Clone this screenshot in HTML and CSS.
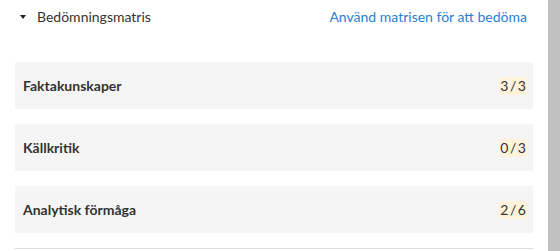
FILE: index.html
```html
<!DOCTYPE html>
<html lang="sv">
<head>
    <meta charset="UTF-8">
    <meta name="viewport" content="width=device-width, initial-scale=1.0">
    <title>Bedömningsmatris</title>
    <link rel="stylesheet" href="styles.css">
</head>
<body>
    <div class="window">
        <div class="panel">
            <div class="matrix-header">
                <div class="toggle">
                    <span class="caret"></span>
                    <span>Bedömningsmatris</span>
                </div>
                <a class="use-link" href="#">Använd matrisen för att bedöma</a>
            </div>

            <div class="criteria">
                <div class="criterion">
                    <span class="criterion-name">Faktakunskaper</span>
                    <span class="score">3 / 3</span>
                </div>
                <div class="criterion">
                    <span class="criterion-name">Källkritik</span>
                    <span class="score">0 / 3</span>
                </div>
                <div class="criterion">
                    <span class="criterion-name">Analytisk förmåga</span>
                    <span class="score">2 / 6</span>
                </div>
            </div>
        </div>
        <div class="scrollbar"></div>
    </div>
</body>
</html>
```

FILE: styles.css
```css
body {
    margin: 0;
    font-family: 'Lato', 'Open Sans', sans-serif;
    font-size: 14px;
    color: #333;
    background: #fff;
}

.window {
    display: flex;
    height: 251px;
    overflow: hidden;
}

.panel {
    flex: 1;
    padding: 0 15px;
}

.scrollbar {
    width: 12px;
    background: #c1c1c1;
}

.matrix-header {
    display: flex;
    align-items: center;
    justify-content: space-between;
    padding: 8px 6px 0 5px;
    line-height: 18px;
}

.toggle {
    display: flex;
    align-items: center;
    gap: 11px;
}

.caret {
    width: 0;
    height: 0;
    border-left: 3.5px solid transparent;
    border-right: 3.5px solid transparent;
    border-top: 4px solid #222;
}

.use-link {
    color: #2a7ed2;
    text-decoration: none;
}

.criteria {
    margin-top: 36px;
    display: flex;
    flex-direction: column;
    gap: 15px;
    padding-bottom: 15px;
    border-bottom: 1px solid #dddddd;
}

.criterion {
    height: 47px;
    display: flex;
    align-items: center;
    justify-content: space-between;
    padding: 0 6px 0 8px;
    background: #f5f5f5;
}

.criterion-name {
    font-weight: bold;
}

.score {
    background: #fff3dc;
    border-radius: 3px;
    padding: 0 1px;
    line-height: 18px;
    word-spacing: -2px;
}
```
